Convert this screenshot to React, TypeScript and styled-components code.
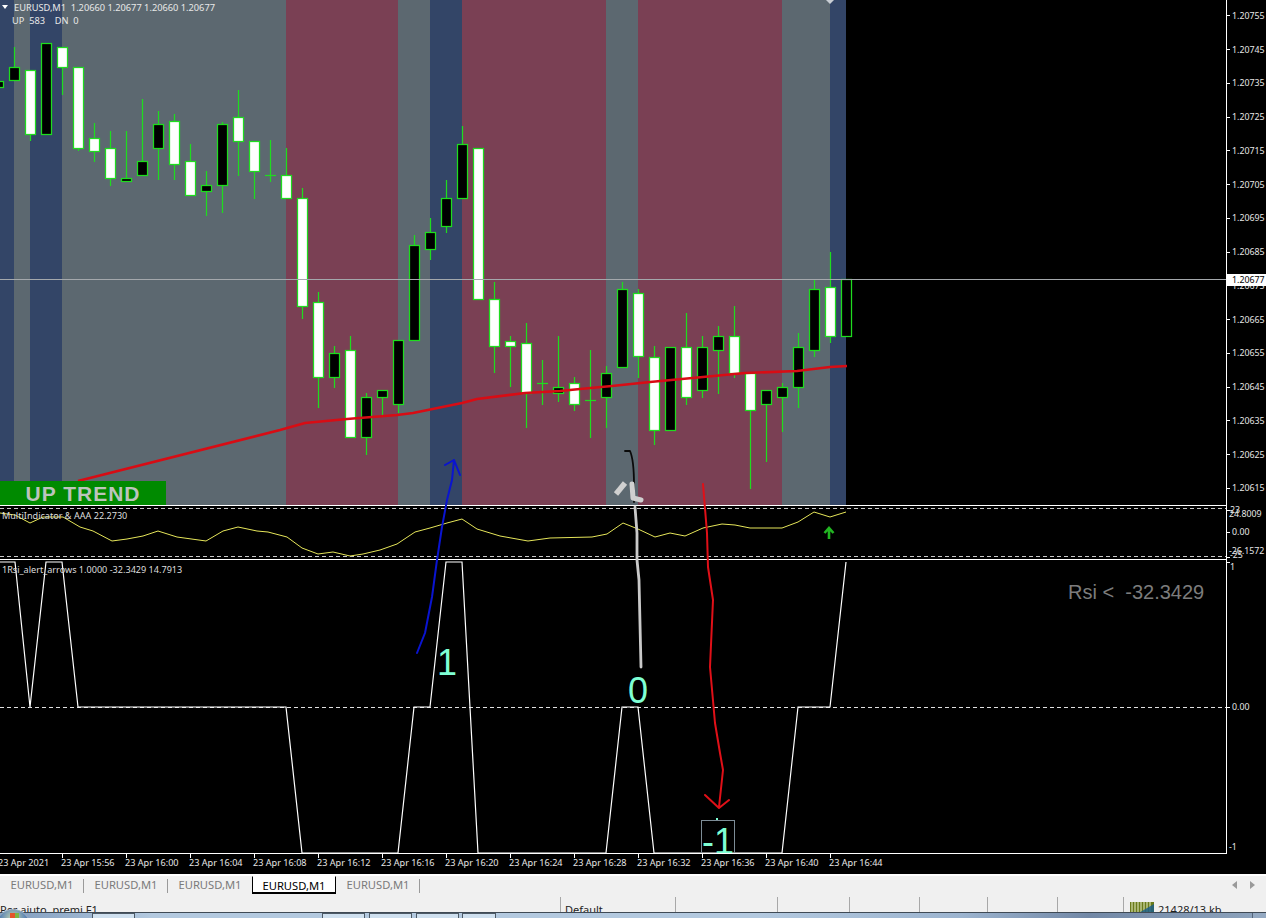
import React from "react";
import styled, { createGlobalStyle } from "styled-components";

const GlobalStyle = createGlobalStyle`
  html, body { margin: 0; padding: 0; background: #000; }
  #root { width: 1266px; height: 918px; overflow: hidden; }
`;

const UI_FONT = `"Noto Sans", "DejaVu Sans", sans-serif`;
const ARIAL = `"Liberation Sans", Arial, sans-serif`;

const Screen = styled.div`
  width: 1266px;
  height: 918px;
  display: flex;
  flex-direction: column;
  overflow: hidden;
  background: #000;
  font-family: ${UI_FONT};
  position: relative;
`;

const Terminal = styled.div`
  height: 874px;
  flex: none;
  display: flex;
  flex-direction: column;
  background: #000;
`;

const ChartRow = styled.div`
  height: 854px;
  flex: none;
  display: flex;
`;

const Panes = styled.div`
  width: 1226px;
  flex: none;
  display: flex;
  flex-direction: column;
  position: relative;
`;

const Pane = styled.div<{ $h: number }>`
  height: ${(p) => p.$h}px;
  flex: none;
  position: relative;
  overflow: hidden;
  border-bottom: 1px solid #fff;
  box-sizing: content-box;
`;

const PaneArt = styled.svg`
  display: block;
  position: absolute;
  left: 0;
  top: 0;
  width: 1226px;
  height: 100%;
`;

const ChartTitle = styled.div`
  position: absolute;
  left: 14px;
  top: 1px;
  color: #e8e8e8;
  font-size: 9.25px;
  line-height: 13px;
  white-space: pre;
`;

const TitleCaret = styled.div`
  position: absolute;
  left: 2px;
  top: 5px;
  width: 0;
  height: 0;
  border-left: 3.5px solid transparent;
  border-right: 3.5px solid transparent;
  border-top: 4px solid #fff;
`;

const Counter = styled.div`
  position: absolute;
  left: 12px;
  top: 14px;
  color: #e8e8e8;
  font-size: 9.25px;
  line-height: 13px;
  white-space: pre;
`;

const TrendBadge = styled.div`
  position: absolute;
  left: 0;
  bottom: 0;
  width: 166px;
  height: 24px;
  background: #008a00;
  color: #bcc4bc;
  font-family: ${ARIAL};
  font-weight: 700;
  font-size: 21px;
  line-height: 25px;
  letter-spacing: 1px;
  text-align: center;
  box-sizing: border-box;
`;

const PaneCaption = styled.div`
  position: absolute;
  left: 2px;
  top: 3px;
  color: #dedede;
  font-size: 9.1px;
  line-height: 13px;
  white-space: pre;
`;

const BigLabel = styled.div<{ $x: number; $y: number; $size: number }>`
  position: absolute;
  left: ${(p) => p.$x}px;
  top: ${(p) => p.$y}px;
  color: #7fffd4;
  font-family: ${ARIAL};
  font-size: ${(p) => p.$size}px;
  line-height: 1;
`;

const BoxLabel = styled.div`
  position: absolute;
  left: 701px;
  top: 260px;
  width: 34px;
  height: 33px;
  box-sizing: border-box;
  border: 1px solid #7d8c96;
  border-bottom: none;
  color: #7fffd4;
  font-family: ${ARIAL};
  font-size: 36px;
  line-height: 42px;
  text-align: center;
  white-space: pre;
  overflow: hidden;
`;

const BoxDot = styled.div`
  position: absolute;
  left: 716px;
  top: 258px;
  width: 2px;
  height: 2px;
  background: #7fffd4;
`;

const RsiReadout = styled.div`
  position: absolute;
  left: 1068px;
  top: 20px;
  color: #7c7c7c;
  font-family: ${ARIAL};
  font-size: 20px;
  line-height: 24px;
  white-space: pre;
`;

const Ink = styled.svg`
  position: absolute;
  left: 0;
  top: 0;
  width: 1226px;
  height: 854px;
  pointer-events: none;
`;

const PriceAxis = styled.div`
  width: 40px;
  flex: none;
  border-left: 1px solid #fff;
  box-sizing: border-box;
  display: flex;
  flex-direction: column;
  position: relative;
  color: #e6e6e6;
  font-size: 8.8px;
`;

const MainScale = styled.div`
  height: 506px;
  flex: none;
  box-sizing: border-box;
  overflow: hidden;
  display: flex;
  flex-direction: column;
`;

const ScaleRow = styled.div`
  height: 33.75px;
  flex: none;
  display: flex;
  align-items: center;
  line-height: 12px;
  white-space: nowrap;
  &:first-child { margin-top: -1px; }
`;

const Tick = styled.span`
  width: 3px;
  height: 1px;
  background: #fff;
  margin-right: 2px;
  flex: none;
`;

const LooseTick = styled.span<{ $y: number }>`
  position: absolute;
  left: 0;
  top: ${(p) => p.$y}px;
  width: 3px;
  height: 1px;
  background: #fff;
`;

const SubScale = styled.div`
  height: 54px;
  flex: none;
  position: relative;
`;

const RsiScale = styled.div`
  height: 294px;
  flex: none;
  position: relative;
`;

const ScaleMark = styled.div<{ $y: number; $x?: number }>`
  position: absolute;
  left: ${(p) => p.$x ?? 0}px;
  top: ${(p) => p.$y}px;
  height: 12px;
  display: flex;
  align-items: center;
  line-height: 12px;
  white-space: nowrap;
`;

const PriceTag = styled.div`
  position: absolute;
  left: 0;
  top: 274px;
  width: 39px;
  height: 12px;
  background: #fff;
  color: #000;
  line-height: 12px;
  padding-left: 5px;
  box-sizing: border-box;
`;

const TimeAxis = styled.div`
  height: 20px;
  flex: none;
  display: flex;
  color: #e6e6e6;
  font-size: 9.1px;
  overflow: hidden;
  margin-left: -2px;
`;

const TimeLabel = styled.div<{ $w: number }>`
  width: ${(p) => p.$w}px;
  flex: none;
  position: relative;
  white-space: nowrap;
  line-height: 13px;
  padding-top: 2px;
  &::before {
    content: "";
    position: absolute;
    left: 1px;
    top: 0;
    width: 1px;
    height: 4px;
    background: #fff;
  }
`;

const TabBar = styled.div`
  height: 21px;
  flex: none;
  background: #f0f0f0;
  border-top: 2px solid #fff;
  display: flex;
  align-items: flex-start;
  color: #7a7a7a;
  font-size: 11.2px;
  position: relative;
`;

const Tab = styled.div<{ $active?: boolean; $sep?: boolean }>`
  width: 84px;
  height: 18px;
  flex: none;
  box-sizing: border-box;
  text-align: center;
  line-height: 17px;
  white-space: nowrap;
  color: ${(p) => (p.$active ? "#000" : "#7a7a7a")};
  background: ${(p) => (p.$active ? "#fff" : "transparent")};
  ${(p) =>
    p.$active
      ? "border: 1px solid #000; border-top-color: #fff; border-bottom-width: 2px;"
      : ""}
  position: relative;
  ${(p) =>
    p.$sep
      ? `&::after { content: ""; position: absolute; right: 0; top: 3px; width: 1px; height: 14px; background: #9a9a9a; }`
      : ""}
`;

const TabArrows = styled.div`
  margin-left: auto;
  width: 34px;
  height: 18px;
  display: flex;
  align-items: center;
  gap: 11px;
  padding-right: 4px;
  box-sizing: border-box;
  svg { display: block; }
`;

const StatusBar = styled.div`
  height: 15px;
  flex: none;
  background: #f0f0f0;
  display: flex;
  overflow: hidden;
  color: #222;
  font-size: 11px;
  line-height: 16px;
`;

const StatusCell = styled.div<{ $w: number; $flush?: boolean }>`
  width: ${(p) => p.$w}px;
  flex: none;
  box-sizing: border-box;
  padding: 5px 0 0 ${(p) => (p.$flush ? 0 : 4)}px;
  border-right: 1px solid #a8a8a8;
  white-space: nowrap;
  overflow: hidden;
  display: flex;
  gap: 4px;
`;

const StatusLast = styled.div`
  flex: 1;
  padding: 5px 0 0 6px;
  display: flex;
  gap: 4px;
  white-space: nowrap;
`;

const Taskbar = styled.div`
  height: 6px;
  flex: none;
  border-top: 1px solid #3f4a55;
  box-sizing: border-box;
  display: flex;
  background: linear-gradient(90deg, #7f9bbd 0%, #b3c9df 12%, #b3c9df 60%, #9cb4cf 76%, #7288a6 86%, #8ea4bd 100%);
  padding-left: 92px;
  position: relative;
`;

const Orb = styled.div`
  position: absolute;
  left: -5px;
  top: -4px;
  width: 36px;
  height: 36px;
  border-radius: 50%;
  background: radial-gradient(circle at 50% 25%, #c8d8b0 0%, #5f87b4 40%, #28507f 100%);
  border: 1px solid #9fb0c2;
  box-sizing: border-box;
`;

const OrbFlag = styled.div`
  position: absolute;
  left: 14px;
  top: 3px;
  width: 9px;
  height: 6px;
  background: linear-gradient(90deg, #e4552b 50%, #7cb642 50%);
`;

const TaskButton = styled.div<{ $w: number; $gap?: number }>`
  width: ${(p) => p.$w}px;
  margin-left: ${(p) => p.$gap ?? 0}px;
  flex: none;
  box-sizing: border-box;
  border: 1px solid #4d5a66;
  border-bottom: none;
  background: #cfe0ef;
`;

const TrayBox = styled.div`
  width: 14px;
  margin-left: auto;
  flex: none;
  box-sizing: border-box;
  border-left: 1px solid #54657a;
  background: #94a9c2;
`;

/* ---------- data ---------- */

const bands: [number, number, string][] = [
  [0, 14, "#334567"],
  [14, 30, "#5c6870"],
  [30, 62, "#334567"],
  [62, 286, "#5c6870"],
  [286, 398, "#7a4054"],
  [398, 430, "#5c6870"],
  [430, 462, "#334567"],
  [462, 606, "#7a4054"],
  [606, 638, "#5c6870"],
  [638, 782, "#7a4054"],
  [782, 830, "#5c6870"],
  [830, 846, "#334567"],
];

type Candle = [number, "b" | "w" | "d", number, number, number, number];
// x, kind, bodyTop, bodyBottom, wickTop, wickBottom
const candles: Candle[] = [
  [-2, "b", 81, 87, 81, 87],
  [14, "b", 67, 80, 47, 80],
  [30, "w", 70, 134, 70, 141],
  [46, "b", 43, 134, 43, 134],
  [62, "w", 47, 67, 47, 95],
  [78, "w", 67, 148, 67, 151],
  [94, "w", 138, 151, 123, 162],
  [110, "w", 148, 178, 131, 186],
  [126, "b", 178, 181, 131, 181],
  [142, "b", 161, 175, 99, 175],
  [158, "b", 124, 148, 111, 180],
  [174, "w", 121, 164, 114, 180],
  [190, "w", 161, 195, 144, 195],
  [206, "b", 185, 191, 171, 216],
  [222, "b", 124, 185, 122, 213],
  [238, "w", 117, 141, 90, 176],
  [254, "w", 141, 171, 141, 199],
  [270, "d", 175, 175, 140, 182],
  [286, "w", 175, 198, 148, 198],
  [302, "w", 198, 306, 188, 319],
  [318, "w", 302, 377, 292, 408],
  [334, "b", 353, 377, 346, 388],
  [350, "w", 350, 437, 336, 437],
  [366, "b", 397, 437, 393, 455],
  [382, "b", 390, 397, 397, 415],
  [398, "b", 340, 404, 340, 413],
  [414, "b", 245, 340, 235, 340],
  [430, "b", 232, 249, 218, 260],
  [446, "b", 198, 226, 180, 233],
  [462, "b", 144, 198, 126, 198],
  [478, "w", 148, 299, 148, 299],
  [494, "w", 299, 346, 282, 373],
  [510, "w", 341, 346, 336, 387],
  [526, "w", 343, 393, 323, 428],
  [542, "d", 383, 383, 360, 405],
  [558, "b", 387, 393, 336, 402],
  [574, "w", 383, 404, 377, 411],
  [590, "d", 400, 400, 350, 438],
  [606, "b", 373, 397, 366, 428],
  [622, "b", 289, 367, 282, 367],
  [638, "w", 293, 356, 289, 378],
  [654, "w", 357, 430, 346, 445],
  [670, "b", 347, 430, 347, 430],
  [686, "w", 347, 397, 313, 405],
  [702, "b", 347, 390, 336, 398],
  [718, "b", 336, 350, 326, 394],
  [734, "w", 336, 373, 306, 378],
  [750, "w", 373, 410, 373, 489],
  [766, "b", 390, 404, 390, 462],
  [782, "b", 387, 397, 383, 432],
  [798, "b", 347, 387, 333, 408],
  [814, "b", 289, 350, 280, 357],
  [830, "w", 287, 336, 252, 343],
  [846, "b", 279, 336, 279, 336],
];

const maPoints =
  "78,481 280,430 305,423 347,419 397,415 413,413 462,403 477,399 525,393 560,391 580,389 612,386 650,382 703,377 745,373 797,371 830,367 847,366";

const oscPoints =
  "0,7 15,9 30,17 43,11 63,11 80,21 93,25 112,35 127,33 143,30 158,25 177,31 206,35 223,25 238,21 257,25 268,26 287,31 302,42 318,48 333,46 350,50 363,48 380,44 397,38 415,26 430,22 447,17 462,13 477,23 500,30 528,35 550,32 592,31 607,28 623,17 638,23 655,31 670,27 685,30 703,22 722,18 735,19 750,22 782,22 798,16 814,6 830,11 846,6";

const rsiPoints =
  "0,2 15,2 30,147 46,2 62,2 78,147 286,147 302,293 398,293 414,147 430,147 446,2 462,2 478,293 606,293 622,147 638,147 654,293 782,293 798,147 830,147 846,2";

const priceRows = [
  "1.20755", "1.20745", "1.20735", "1.20725", "1.20715", "1.20705", "1.20695", "1.20685",
  "1.20675", "1.20665", "1.20655", "1.20645", "1.20635", "1.20625", "1.20615",
];

const timeRows = [
  "23 Apr 15:56", "23 Apr 16:00", "23 Apr 16:04", "23 Apr 16:08", "23 Apr 16:12", "23 Apr 16:16",
  "23 Apr 16:20", "23 Apr 16:24", "23 Apr 16:28", "23 Apr 16:32", "23 Apr 16:36", "23 Apr 16:40", "23 Apr 16:44",
];

const statusWidths = [102, 72, 70, 68, 70, 66];
const GREEN = "#1fdc1f";

const CandleMark: React.FC<{ c: Candle }> = ({ c }) => {
  const [x, kind, top, bottom, wt, wb] = c;
  return (
    <g stroke={GREEN} strokeWidth={1.25}>
      <line x1={x + 0.5} x2={x + 0.5} y1={wt} y2={wb} />
      {kind === "d" ? (
        <line x1={x - 5} x2={x + 6} y1={top + 0.5} y2={top + 0.5} />
      ) : (
        <rect
          x={x - 5 + 0.5}
          y={top + 0.5}
          width={10}
          height={bottom - top}
          fill={kind === "w" ? "#fff" : "#000"}
        />
      )}
    </g>
  );
};

export default function App() {
  return (
    <Screen>
      <GlobalStyle />
      <Terminal>
        <ChartRow>
          <Panes>
            <Pane $h={505}>
              <PaneArt viewBox="0 0 1226 505">
                {bands.map(([a, b, col]) => (
                  <rect key={a} x={a} y={0} width={b - a} height={505} fill={col} />
                ))}
                <polygon points="826,0 834,0 830,4" fill="#c9ced4" />
                {candles.map((c) => (
                  <CandleMark key={c[0]} c={c} />
                ))}
                <line x1={0} x2={1226} y1={279.5} y2={279.5} stroke="#a4a8ac" strokeWidth={1} />
                <polyline points={maPoints} fill="none" stroke="#d80c14" strokeWidth={2.7} />
              </PaneArt>
              <TitleCaret />
              <ChartTitle>EURUSD,M1  1.20660 1.20677 1.20660 1.20677</ChartTitle>
              <Counter>UP  583    DN  0</Counter>
              <TrendBadge>UP TREND</TrendBadge>
            </Pane>
            <Pane $h={53}>
              <PaneArt viewBox="0 0 1226 53">
                <line x1={0} x2={1226} y1={2.5} y2={2.5} stroke="#c8c8c8" strokeDasharray="4 3" />
                <line x1={0} x2={1226} y1={50.5} y2={50.5} stroke="#c8c8c8" strokeDasharray="4 3" />
                <polyline points={oscPoints} fill="none" stroke="#e6e65a" strokeWidth={1} />
                <g fill="none" stroke="#22b522" strokeWidth={2.6}>
                  <path d="M829 33V22M824.5 27l4.5-5 4.5 5" />
                </g>
              </PaneArt>
              <PaneCaption>MultiIndicator &amp; AAA 22.2730</PaneCaption>
            </Pane>
            <Pane $h={293}>
              <PaneArt viewBox="0 0 1226 293">
                <line x1={0} x2={1226} y1={147.5} y2={147.5} stroke="#e0e0e0" strokeDasharray="4 3" />
                <polyline points={rsiPoints} fill="none" stroke="#fff" strokeWidth={1.2} />
              </PaneArt>
              <PaneCaption>1Rsi_alert_arrows 1.0000 -32.3429 14.7913</PaneCaption>
              <RsiReadout>Rsi &lt;  -32.3429</RsiReadout>
              <BigLabel $x={437} $y={85} $size={36}>1</BigLabel>
              <BigLabel $x={628} $y={113} $size={36}>0</BigLabel>
              <BoxDot />
              <BoxLabel>-1</BoxLabel>
            </Pane>
            <Ink viewBox="0 0 1226 854">
              <g fill="none" strokeLinecap="round" strokeLinejoin="round">
                <path d="M417 653 L425 633 L432 597 L437 560 L442 527 L447 500 L452 480 L454 460 M445 465 L454 460 L460 475" stroke="#0a14d0" strokeWidth={2} />
                <path d="M625 451 L630 451 Q634 460 634 485 L634 502" stroke="#0a0a0a" strokeWidth={1.8} />
                <path d="M635 507 L637 533 L637 560 L639 580 L641 667" stroke="#c9c9c9" strokeWidth={2.8} />
                <path d="M616 494 L625 483" stroke="#d0d0d0" strokeWidth={5.5} strokeLinecap="butt" />
                <path d="M632 484 L633 498 L641 500" stroke="#d0d0d0" strokeWidth={5} />
                <path d="M703 484 L707 533 L708 567 L713 600 L710 667 L715 723 L720 753 L723 770 L719 807 M705 795 L719 808 L729 800" stroke="#e01018" strokeWidth={2} />
              </g>
            </Ink>
          </Panes>
          <PriceAxis>
            <MainScale>
              {priceRows.map((p) => (
                <ScaleRow key={p}>
                  <Tick />
                  {p}
                </ScaleRow>
              ))}
            </MainScale>
            <PriceTag>1.20677</PriceTag>
            <SubScale>
              <LooseTick $y={4} />
              <ScaleMark $y={-2} $x={3}>23</ScaleMark>
              <ScaleMark $y={2} $x={2}>24.8009</ScaleMark>
              <ScaleMark $y={20}><Tick />0.00</ScaleMark>
              <ScaleMark $y={39} $x={2}>-26.1572</ScaleMark>
              <ScaleMark $y={43} $x={3}>-25</ScaleMark>
              <LooseTick $y={51} />
            </SubScale>
            <RsiScale>
              <LooseTick $y={2} />
              <ScaleMark $y={1} $x={3}>1</ScaleMark>
              <ScaleMark $y={141}><Tick />0.00</ScaleMark>
              <ScaleMark $y={281} $x={2}>-1</ScaleMark>
            </RsiScale>
          </PriceAxis>
        </ChartRow>
        <TimeAxis>
          <TimeLabel $w={63}>23 Apr 2021</TimeLabel>
          {timeRows.map((t) => (
            <TimeLabel key={t} $w={64}>
              {t}
            </TimeLabel>
          ))}
        </TimeAxis>
      </Terminal>
      <TabBar>
        <Tab $sep>EURUSD,M1</Tab>
        <Tab $sep>EURUSD,M1</Tab>
        <Tab>EURUSD,M1</Tab>
        <Tab $active>EURUSD,M1</Tab>
        <Tab $sep>EURUSD,M1</Tab>
        <TabArrows>
          <svg width="6" height="8" viewBox="0 0 6 8"><path d="M5 0v8L0 4z" fill="#9a9a9a" /></svg>
          <svg width="6" height="8" viewBox="0 0 6 8"><path d="M1 0v8l5-4z" fill="#9a9a9a" /></svg>
        </TabArrows>
      </TabBar>
      <StatusBar>
        <StatusCell $w={561} $flush>Per aiuto, premi F1</StatusCell>
        <StatusCell $w={115}>Default</StatusCell>
        {statusWidths.map((w, i) => (
          <StatusCell key={i} $w={w} />
        ))}
        <StatusLast>
          <svg width="24" height="16" viewBox="0 0 24 16" style={{ flex: "none" }}>
            <rect width="24" height="16" fill="#6a7a1a" />
            <path d="M2 0v16M5 0v16M8 0v16M11 0v16M14 0v16M17 0v16M20 0v16" stroke="#e8efc8" strokeWidth="1" />
            <path d="M0 16L24 2V16z" fill="#1d5f86" opacity=".85" />
          </svg>
          21428/13 kb
        </StatusLast>
      </StatusBar>
      <Taskbar>
        <Orb>
          <OrbFlag />
        </Orb>
        <TaskButton $w={43} />
        <TaskButton $w={43} $gap={187} />
        <TaskButton $w={43} $gap={4} />
        <TaskButton $w={43} $gap={4} />
        <TaskButton $w={34} $gap={3} />
        <TrayBox />
      </Taskbar>
    </Screen>
  );
}
